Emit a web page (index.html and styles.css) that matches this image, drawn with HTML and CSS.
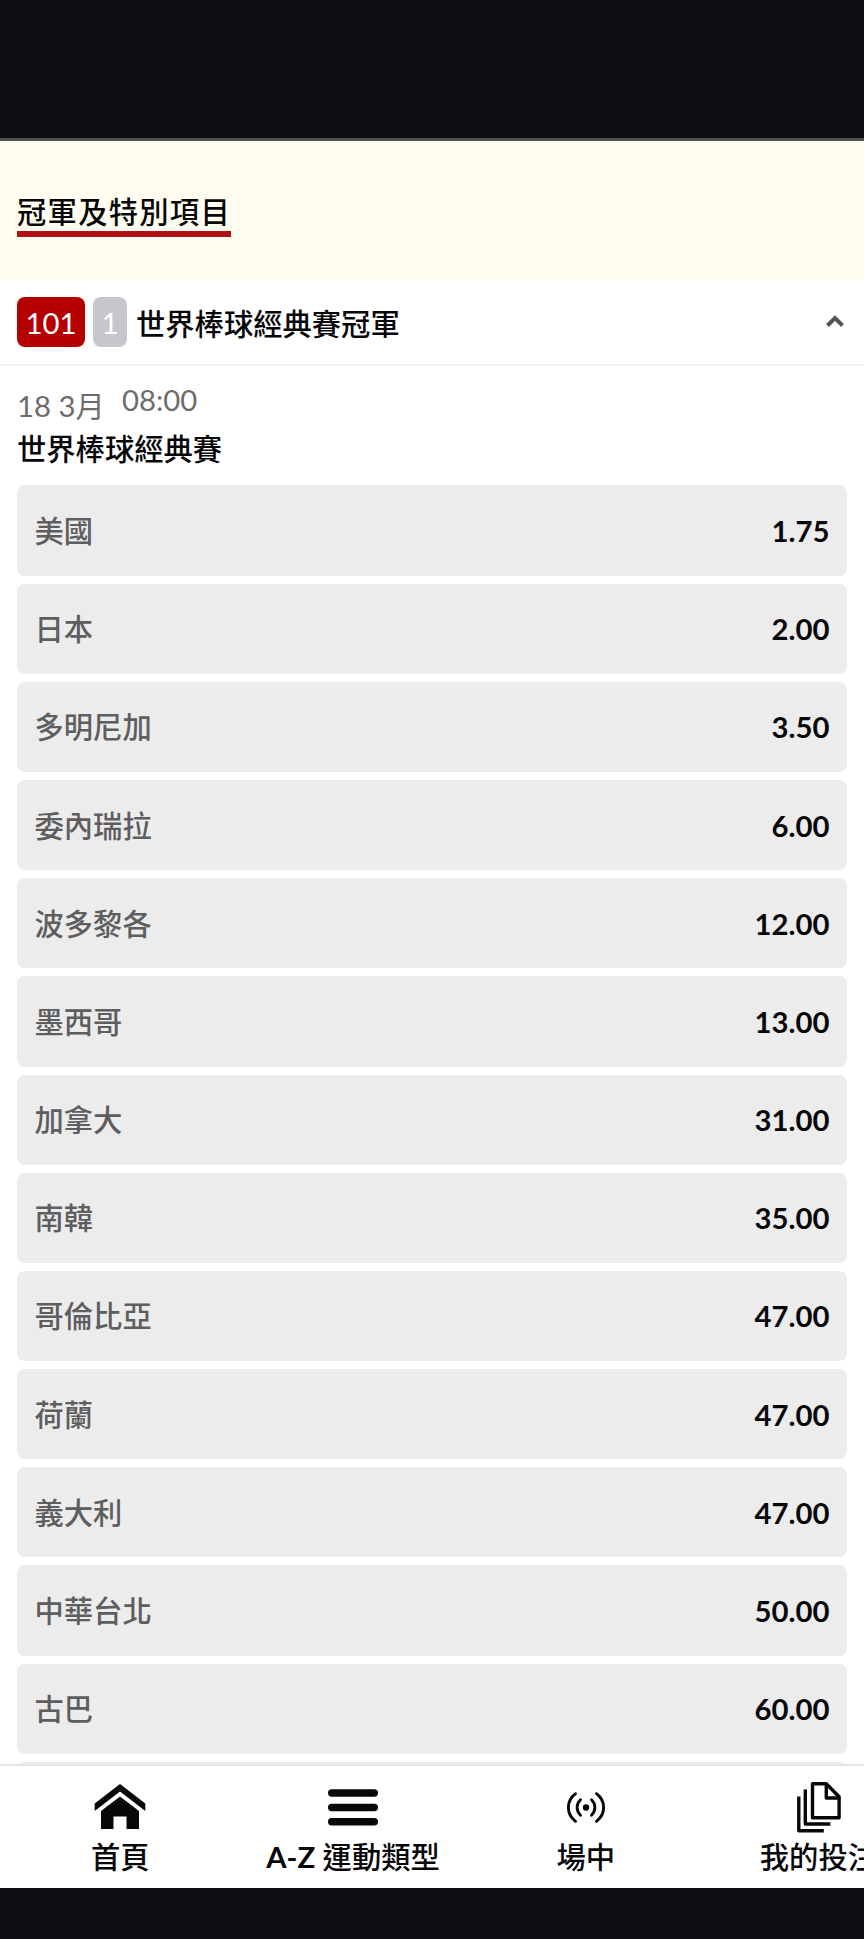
FILE: index.html
```html
<!DOCTYPE html>
<html lang="zh-Hant">

<head>
    <meta charset="UTF-8">
    <meta name="viewport" content="width=device-width, initial-scale=1.0">
    <title>冠軍及特別項目</title>
    <link rel="stylesheet" href="styles.css">
</head>

<body>
    <div class="screen">
        <div class="top-bar"></div>

        <header class="page-header">
            <h1 class="page-title">冠軍及特別項目</h1>
        </header>

        <main class="content">
            <div class="league">
                <span class="badge badge-id">101</span>
                <span class="badge badge-count">1</span>
                <h2 class="league-name">世界棒球經典賽冠軍</h2>
                <svg class="league-arrow" width="18" height="12" viewBox="0 0 18 12">
                    <path d="M1.5 10.5L9 3L16.5 10.5" fill="none" stroke="#555" stroke-width="4"/>
                </svg>
            </div>

            <div class="event">
                <div class="event-time">
                    <span class="event-date">18 3月</span>
                    <span class="event-hour">08:00</span>
                </div>
                <h3 class="event-name">世界棒球經典賽</h3>
            </div>

            <div class="odds-list">
                <div class="odds-row"><span class="team">美國</span><span class="odds">1.75</span></div>
                <div class="odds-row"><span class="team">日本</span><span class="odds">2.00</span></div>
                <div class="odds-row"><span class="team">多明尼加</span><span class="odds">3.50</span></div>
                <div class="odds-row"><span class="team">委內瑞拉</span><span class="odds">6.00</span></div>
                <div class="odds-row"><span class="team">波多黎各</span><span class="odds">12.00</span></div>
                <div class="odds-row"><span class="team">墨西哥</span><span class="odds">13.00</span></div>
                <div class="odds-row"><span class="team">加拿大</span><span class="odds">31.00</span></div>
                <div class="odds-row"><span class="team">南韓</span><span class="odds">35.00</span></div>
                <div class="odds-row"><span class="team">哥倫比亞</span><span class="odds">47.00</span></div>
                <div class="odds-row"><span class="team">荷蘭</span><span class="odds">47.00</span></div>
                <div class="odds-row"><span class="team">義大利</span><span class="odds">47.00</span></div>
                <div class="odds-row"><span class="team">中華台北</span><span class="odds">50.00</span></div>
                <div class="odds-row"><span class="team">古巴</span><span class="odds">60.00</span></div>
                <div class="odds-row"></div>
            </div>
        </main>

        <nav class="bottom-nav">
            <a class="nav-item">
                <svg class="nav-icon" width="52" height="52" viewBox="0 0 52 52" fill="#08080a">
                    <path d="M26 3L51.3 22.5V30L26 10.5L.7 30V22.5z"/>
                    <path d="M26 15.5L45 30V48H32.5V35.5H19.5V48H7V30z"/>
                </svg>
                <span class="nav-label">首頁</span>
            </a>
            <a class="nav-item">
                <svg class="nav-icon" width="52" height="52" viewBox="0 0 52 52" stroke="#08080a" stroke-width="7.4" stroke-linecap="round">
                    <path d="M4.7 12H47.3M4.7 26.5H47.3M4.7 40.8H47.3"/>
                </svg>
                <span class="nav-label"><span class="latin">A-Z</span> 運動類型</span>
            </a>
            <a class="nav-item">
                <svg class="nav-icon" width="52" height="52" viewBox="0 0 52 52" fill="none" stroke="#08080a" stroke-width="2.9" stroke-linecap="round">
                    <circle cx="26" cy="26.5" r="3.2" fill="#08080a" stroke="none"/>
                    <path d="M20.5 18.8C16 23 16 30 20.5 34.2M31.5 18.8C36 23 36 30 31.5 34.2"/>
                    <path d="M15.5 12.7C6 20 6 33 15.5 40.3M36.5 12.7C46 20 46 33 36.5 40.3"/>
                </svg>
                <span class="nav-label">場中</span>
            </a>
            <a class="nav-item">
                <svg class="nav-icon" width="52" height="52" viewBox="0 0 52 52" fill="none" stroke="#08080a" stroke-width="3.4" stroke-linejoin="round">
                    <path d="M20.5 2.7H34.3L47.1 15.8V36.7H20.5z"/>
                    <path d="M34.3 3V17H47"/>
                    <path d="M13.3 8.5V43H38.3M6.8 15.5V49.7H31.8"/>
                </svg>
                <span class="nav-label">我的投注</span>
            </a>
        </nav>

        <div class="bottom-bar"></div>
    </div>
</body>

</html>
```
FILE: styles.css
```css
* {
    box-sizing: border-box;
}

body {
    margin: 0;
    font-family: Lato, "Noto Sans CJK TC", sans-serif;
    font-size: 29.3px;
    color: #08080a;
    background: #0d0d12;
}

h1,
h2,
h3 {
    margin: 0;
    font-size: inherit;
    font-weight: 500;
}

.screen {
    display: flex;
    flex-direction: column;
    width: 100%;
    height: 1939px;
    overflow: hidden;
}

.top-bar {
    flex: none;
    height: 141px;
    background: #0d0d12;
    border-bottom: 3px solid #505052;
}

.page-header {
    flex: none;
    height: 139px;
    padding: 48px 17px 0;
    background: #fffdf0;
}

.page-title {
    display: inline-block;
    height: 48px;
    line-height: 45px;
    letter-spacing: 1.27px;
    border-bottom: 6px solid #b01118;
}

.content {
    flex: none;
    height: 1484px;
    overflow: hidden;
    background: #fff;
}

.league {
    display: flex;
    align-items: center;
    height: 86px;
    padding: 0 20px 0 17px;
    border-bottom: 2px solid #f3f3f3;
}

.badge {
    height: 50px;
    margin-right: 8px;
    border-radius: 8px;
    line-height: 52px;
    text-align: center;
    color: #fff;
}

.badge-id {
    width: 68px;
    background: #b60000;
}

.badge-count {
    width: 34px;
    background: #c6c6cb;
}

.league-name {
    flex: 1;
    line-height: 44px;
    padding: 3px 0 0 1px;
}

.league-arrow {
    margin-bottom: 3px;
}

.event {
    height: 119.4px;
    padding: 14px 17px 0;
}

.event-time {
    display: flex;
    height: 49px;
    line-height: 51px;
    color: #6c6c6c;
}

.event-date {
    width: 105px;
}

.event-hour {
    line-height: 40px;
}

.event-name {
    line-height: 40px;
}

.odds-list {
    display: flex;
    flex-direction: column;
    gap: 8px;
    padding: 0 17px;
}

.odds-row {
    display: flex;
    flex: none;
    justify-content: space-between;
    align-items: center;
    height: 90.2px;
    padding: 0 17.5px;
    border-radius: 8px;
    background: #ececec;
}

.team {
    padding-bottom: 3px;
    font-weight: 500;
    color: #5e5e5e;
}

.odds {
    font-weight: 700;
}

.bottom-nav {
    display: flex;
    flex: none;
    height: 124px;
    padding-left: 4px;
    overflow: hidden;
    background: #fff;
    border-top: 2px solid #e6e6e6;
}

.nav-item {
    display: flex;
    flex: none;
    flex-direction: column;
    align-items: center;
    width: 232.7px;
    padding-top: 15px;
}

.nav-label {
    font-weight: 500;
    line-height: 47px;
    white-space: nowrap;
}

.latin {
    font-weight: 700;
}

.bottom-bar {
    flex: 1;
    background: #0d0d12;
}
```
